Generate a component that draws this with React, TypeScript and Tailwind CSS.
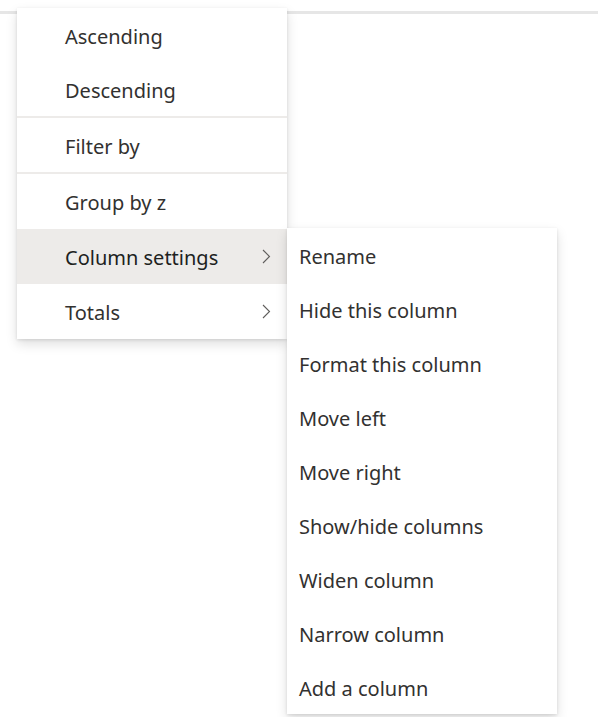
import React from 'react';

type Item = { label: string; submenu?: boolean; active?: boolean };

const mainGroups: Item[][] = [
  [{ label: 'Ascending' }, { label: 'Descending' }],
  [{ label: 'Filter by' }],
  [{ label: 'Group by z' }, { label: 'Column settings', submenu: true, active: true }, { label: 'Totals', submenu: true }],
];

const columnItems = [
  'Rename',
  'Hide this column',
  'Format this column',
  'Move left',
  'Move right',
  'Show/hide columns',
  'Widen column',
  'Narrow column',
  'Add a column',
];

const Chevron = () => (
  <svg width="9" height="15" viewBox="0 0 9 15" className="text-[#605e5c]">
    <path d="M1 1 7.5 7.5 1 14" fill="none" stroke="currentColor" strokeWidth="1.1" />
  </svg>
);

const menuShadow = 'shadow-[0_5px_11px_rgba(0,0,0,0.13),0_1px_3px_rgba(0,0,0,0.11)]';

export default function App() {
  return (
    <div className="relative h-[717px] w-full bg-white font-['Noto_Sans',sans-serif] text-[20px] text-[#323130]">
      <div className="pt-[11px]">
        <div className="h-[3px] bg-[#e6e6e6]" />
      </div>

      <div className={`absolute left-[17px] top-[8px] w-[270px] bg-white ${menuShadow}`}>
        {mainGroups.map((group, gi) => (
          <div key={gi} className={gi > 0 ? 'border-t-2 border-[#edebe9]' : ''}>
            {group.map(item => (
              <div
                key={item.label}
                className={`relative flex items-center justify-between pl-[48px] pr-[16px] ${
                  gi === 2 ? 'h-[55px]' : 'h-[54px]'
                } ${item.active ? 'bg-[#edebe9] text-[#201f1e]' : ''}`}
              >
                <span className="pt-[3px]">{item.label}</span>
                {item.submenu && <Chevron />}

                {item.active && (
                  <div className={`absolute left-full top-[-1px] w-[270px] bg-white text-[#323130] ${menuShadow}`}>
                    {columnItems.map(label => (
                      <div key={label} className="flex h-[54px] items-center pl-[12px] pt-[3px]">
                        {label}
                      </div>
                    ))}
                  </div>
                )}
              </div>
            ))}
          </div>
        ))}
      </div>
    </div>
  );
}
